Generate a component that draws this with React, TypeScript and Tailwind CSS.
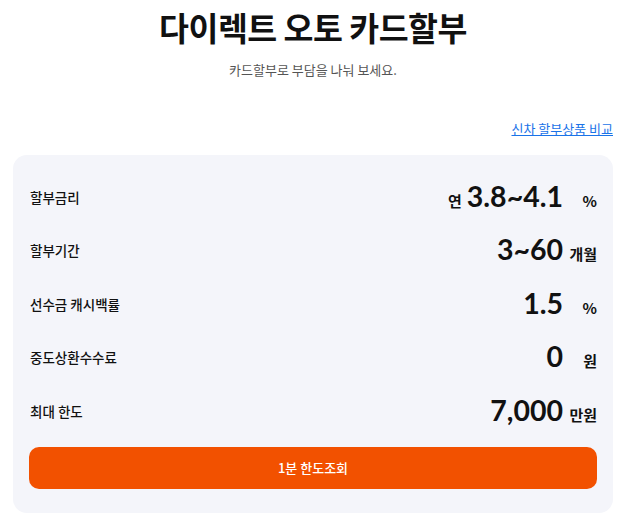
const kr = { fontFamily: '"Noto Sans CJK KR", "Noto Sans", sans-serif' }
const num = { fontFamily: 'Lato, "Noto Sans CJK KR", sans-serif' }

const rows = [
  { label: '할부금리', pre: '연', value: '3.8~4.1', unit: '%' },
  { label: '할부기간', value: '3~60', unit: '개월' },
  { label: '선수금 캐시백률', value: '1.5', unit: '%' },
  { label: '중도상환수수료', value: '0', unit: '원' },
  { label: '최대 한도', value: '7,000', unit: '만원' },
]

export default function App() {
  return (
    <div className="min-h-screen bg-white text-[#111]" style={kr}>
      <div className="pl-[13px] pr-[16px] pt-[5px]">
        <h1 className="text-center text-[32.5px] font-bold leading-[44px] tracking-[-0.5px]">다이렉트 오토 카드할부</h1>
        <p className="mt-[12px] text-center text-[13px] leading-[18px] text-[#555]">카드할부로 부담을 나눠 보세요.</p>

        <div className="mt-[41px] flex justify-end">
          <a href="#" className="text-[13px] leading-[18px] text-[#1a73e8] underline">신차 할부상품 비교</a>
        </div>

        <div className="mt-[17px] rounded-[14px] bg-[#f4f5fa] px-[16px] pt-[15px] pb-[24px]">
          {rows.map((r) => (
            <div key={r.label} className="flex h-[53.5px] items-center justify-between pl-[1px]">
              <span className="text-[13.5px] font-medium">{r.label}</span>
              <div className="flex items-baseline" style={num}>
                {r.pre && <span className="mr-[5px] text-[15px] font-bold" style={kr}>{r.pre}</span>}
                <span className="text-[28.5px] font-bold leading-none">{r.value}</span>
                <span className="ml-[4px] w-[30px] text-right text-[15px] font-bold" style={kr}>{r.unit}</span>
              </div>
            </div>
          ))}
          <button className="mt-[9px] h-[42px] w-full rounded-[10px] bg-[#f25100] text-[13px] font-medium text-white">1분 한도조회</button>
        </div>
      </div>
    </div>
  )
}
